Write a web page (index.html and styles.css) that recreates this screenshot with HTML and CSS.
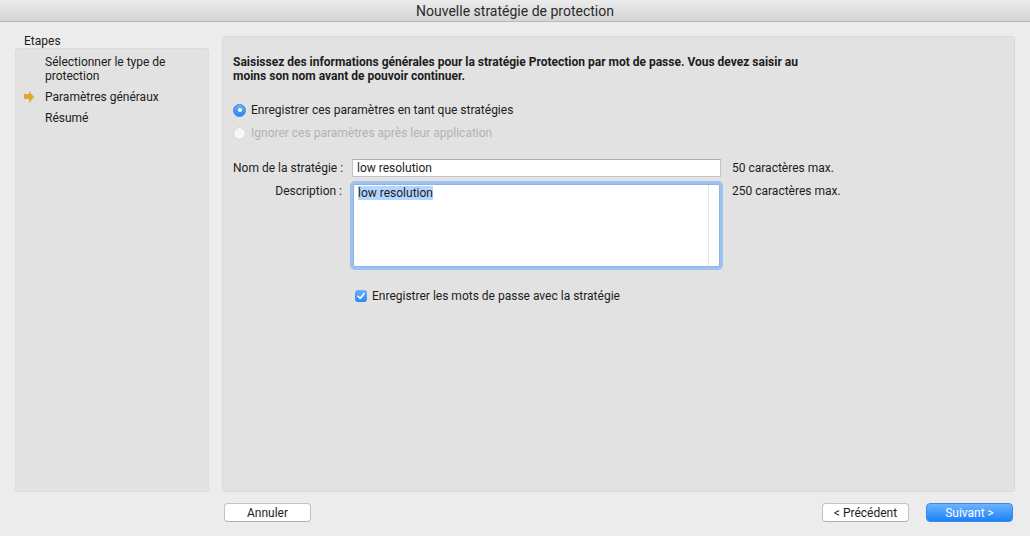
FILE: index.html
```html
<!DOCTYPE html>
<html lang="fr">
<head>
    <meta charset="UTF-8">
    <title>Nouvelle stratégie de protection</title>
    <link rel="stylesheet" href="styles.css">
</head>
<body>
    <div class="titlebar">Nouvelle stratégie de protection</div>

    <div class="content">
        <div class="steps">
            <div class="steps-label">Etapes</div>
            <ul class="steps-list">
                <li>Sélectionner le type de protection</li>
                <li class="current">Paramètres généraux</li>
                <li>Résumé</li>
            </ul>
        </div>

        <div class="main">
            <p class="intro">Saisissez des informations générales pour la stratégie Protection par mot de passe. Vous devez saisir au moins son nom avant de pouvoir continuer.</p>

            <div class="radios">
                <label class="radio checked"><span class="dot"></span>Enregistrer ces paramètres en tant que stratégies</label>
                <label class="radio disabled"><span class="dot"></span>Ignorer ces paramètres après leur application</label>
            </div>

            <div class="form">
                <span class="label">Nom de la stratégie :</span>
                <div class="input">low resolution</div>
                <span class="note">50 caractères max.</span>

                <span class="label top">Description :</span>
                <div class="textarea">
                    <span class="selected">low resolution</span>
                    <div class="scroll"></div>
                </div>
                <span class="note top">250 caractères max.</span>
            </div>

            <label class="check"><span class="box">
                <svg width="10" height="10" viewBox="0 0 10 10"><path d="M2 5.2 L4.2 7.4 L8 2.6" fill="none" stroke="#fff" stroke-width="1.6" stroke-linecap="round" stroke-linejoin="round"/></svg>
            </span>Enregistrer les mots de passe avec la stratégie</label>
        </div>
    </div>

    <div class="footer">
        <button class="btn">Annuler</button>
        <div class="nav">
            <button class="btn">&lt; Précédent</button>
            <button class="btn primary">Suivant &gt;</button>
        </div>
    </div>
</body>
</html>
```

FILE: styles.css
```css
body {
    margin: 0;
    background-color: #ececec;
    font-family: Roboto, "Liberation Sans", Arial, sans-serif;
    font-size: 12px;
    color: #1c1c1c;
    height: 536px;
    overflow: hidden;
}

.titlebar {
    height: 22px;
    line-height: 23px;
    text-align: center;
    font-size: 14px;
    color: #2a2a2a;
    background: linear-gradient(#ebebeb, #d5d5d5);
    border-bottom: 1px solid #b9b9b9;
    box-sizing: border-box;
}

.content {
    display: flex;
    gap: 13px;
    padding: 14px 15px 0 15px;
    height: 456px;
}

.steps {
    width: 194px;
    display: flex;
    flex-direction: column;
}

.steps-label {
    height: 12px;
    line-height: 12px;
    padding-left: 9px;
    position: relative;
    top: -1px;
}

.steps-list {
    list-style: none;
    margin: 0;
    padding: 6px 8px 0 29px;
    flex: 1;
    background-color: #e2e2e2;
    border: 1px solid #dcdcdc;
    border-radius: 3px;
    line-height: 14px;
}

.steps-list li {
    margin-bottom: 7px;
    position: relative;
}

.steps-list li.current::before {
    content: "";
    position: absolute;
    left: -21px;
    top: 4px;
    width: 5px;
    height: 5px;
    background-color: #e5a730;
}

.steps-list li.current::after {
    content: "";
    position: absolute;
    left: -16px;
    top: 1px;
    border-left: 5px solid #e5a730;
    border-top: 6px solid transparent;
    border-bottom: 6px solid transparent;
}

.main {
    flex: 1;
    background-color: #e2e2e2;
    border: 1px solid #dadada;
    border-radius: 3px;
    padding: 18px 10px 0 10px;
}

.intro {
    margin: 0;
    width: 600px;
    font-weight: bold;
    line-height: 14px;
}

.radios {
    margin-top: 19px;
    display: flex;
    flex-direction: column;
    gap: 7px;
}

.radio {
    display: flex;
    align-items: center;
    gap: 5px;
    height: 16px;
}

.radio .dot {
    width: 13px;
    height: 13px;
    border-radius: 50%;
    box-sizing: border-box;
    position: relative;
}

.radio.checked .dot {
    background: linear-gradient(#69b1fa, #2a87f5);
    border: 1px solid #3a82e0;
}

.radio.checked .dot::after {
    content: "";
    position: absolute;
    left: 3.5px;
    top: 3.5px;
    width: 4px;
    height: 4px;
    border-radius: 50%;
    background-color: #fff;
}

.radio.disabled {
    color: #b3b3b3;
}

.radio.disabled .dot {
    background-color: #f6f6f6;
    border: 1px solid #d4d4d4;
}

.form {
    margin-top: 18px;
    display: grid;
    grid-template-columns: 109px 369px auto;
    column-gap: 10px;
    row-gap: 7px;
    align-items: center;
}

.label {
    text-align: right;
    white-space: nowrap;
}

.label.top, .note.top {
    align-self: start;
}

.note {
    margin-left: 1px;
    white-space: nowrap;
}

.input {
    height: 18px;
    line-height: 17px;
    box-sizing: border-box;
    background-color: #fff;
    border: 1px solid #c3c3c3;
    border-top-color: #aeaeae;
    padding-left: 4px;
}

.textarea {
    height: 83px;
    box-sizing: border-box;
    background-color: #fff;
    border: 1px solid #8fb3e2;
    box-shadow: 0 0 0 3px #9ec2ef;
    border-radius: 2px;
    padding: 1px 0 0 4px;
    line-height: 14px;
    position: relative;
    margin-left: 1px;
    width: 367px;
}

.selected {
    background-color: #b4d5fe;
}

.scroll {
    position: absolute;
    right: 10px;
    top: 0;
    bottom: 0;
    border-left: 1px solid #e4e4e4;
}

.check {
    display: flex;
    align-items: center;
    gap: 5px;
    margin-top: 21px;
    margin-left: 122px;
    height: 16px;
}

.check .box {
    width: 12px;
    height: 12px;
    border-radius: 3px;
    background: linear-gradient(#69b1fa, #2a87f5);
    display: flex;
    align-items: center;
    justify-content: center;
}

.footer {
    display: flex;
    justify-content: space-between;
    padding: 11px 17px 0 224px;
}

.nav {
    display: flex;
    gap: 17px;
}

.btn {
    width: 87px;
    height: 19px;
    padding: 0;
    font-family: Roboto, "Liberation Sans", Arial, sans-serif;
    font-size: 12px;
    color: #1c1c1c;
    background-color: #fff;
    border: 1px solid #c2c2c2;
    border-bottom-color: #aeaeae;
    border-radius: 4px;
}

.btn.primary {
    color: #fff;
    background: linear-gradient(#6db3fb, #1b82fb);
    border-color: #3a8ae8;
}
```
